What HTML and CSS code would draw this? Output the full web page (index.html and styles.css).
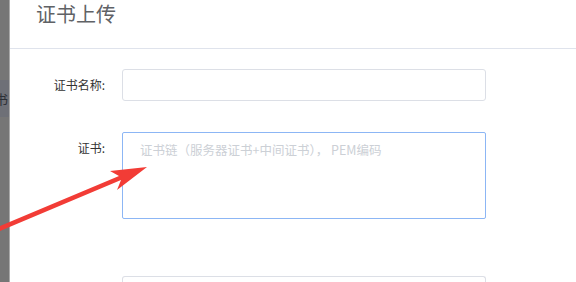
FILE: index.html
```html
<!DOCTYPE html>
<html>
<head>
<meta charset="utf-8">
<link rel="stylesheet" href="styles.css">
</head>
<body>
<div class="page">
  <div class="backdrop">
    <div class="back-item">证书</div>
  </div>
  <div class="dialog">
    <div class="header"><span class="title">证书上传</span></div>
    <div class="form">
      <div class="row row-name">
        <label class="label">证书名称:</label>
        <div class="input"></div>
      </div>
      <div class="row row-cert">
        <label class="label">证书:</label>
        <div class="textarea"><span class="placeholder">证书链（服务器证书+中间证书）， PEM编码</span></div>
      </div>
      <div class="row row-key">
        <label class="label"></label>
        <div class="input input-last"></div>
      </div>
    </div>
  </div>
  <svg class="arrow" width="576" height="282" viewBox="0 0 576 282">
    <path d="M0 231 L121 180 L117 190 L147 167 L110 171 L119 176 L0 226 Z" fill="#f23c36"/>
  </svg>
</div>
</body>
</html>
```
FILE: styles.css
```css
* { box-sizing: border-box; }
html, body { margin: 0; padding: 0; }
body { width: 576px; height: 282px; overflow: hidden; background: #fff; font-family: "Noto Sans CJK SC", "Liberation Sans", sans-serif; }
.page { position: relative; display: flex; width: 576px; height: 282px; overflow: hidden; }
.backdrop { width: 10px; flex: none; background: #767676; border-right: 1px solid #a9a9a9; padding-top: 80px; overflow: hidden; }
.back-item { height: 37px; background: #6e7077; color: #2c2f36; font-size: 13px; line-height: 37px; white-space: nowrap; margin-left: -18px; }
.dialog { flex: 1; background: #fff; overflow: hidden; }
.header { height: 49px; border-bottom: 1px solid #dfe3ec; padding-left: 26px; }
.title { font-size: 20px; color: #606266; line-height: 28px; display: block; }
.form { padding-top: 20px; }
.row { display: flex; align-items: flex-start; }
.label { width: 96px; flex: none; text-align: right; font-size: 12px; color: #333; padding-right: 1px; }
.input { width: 364px; height: 32px; margin-left: 16px; border: 1px solid #dcdfe6; border-radius: 3px; }
.row-name .label { line-height: 32px; }
.row-cert { margin-top: 31px; }
.row-cert .label { line-height: 32px; }
.textarea { width: 364px; height: 87px; margin-left: 16px; border: 1.5px solid #8cb6f5; border-radius: 2px; padding: 3px 17px; }
.placeholder { font-size: 12.5px; color: #ccd0d6; line-height: 20px; }
.row-key { margin-top: 57px; }
.input-last { height: 20px; border-bottom: none; border-radius: 3px 3px 0 0; }
.arrow { position: absolute; left: 0; top: 0; pointer-events: none; }
```
